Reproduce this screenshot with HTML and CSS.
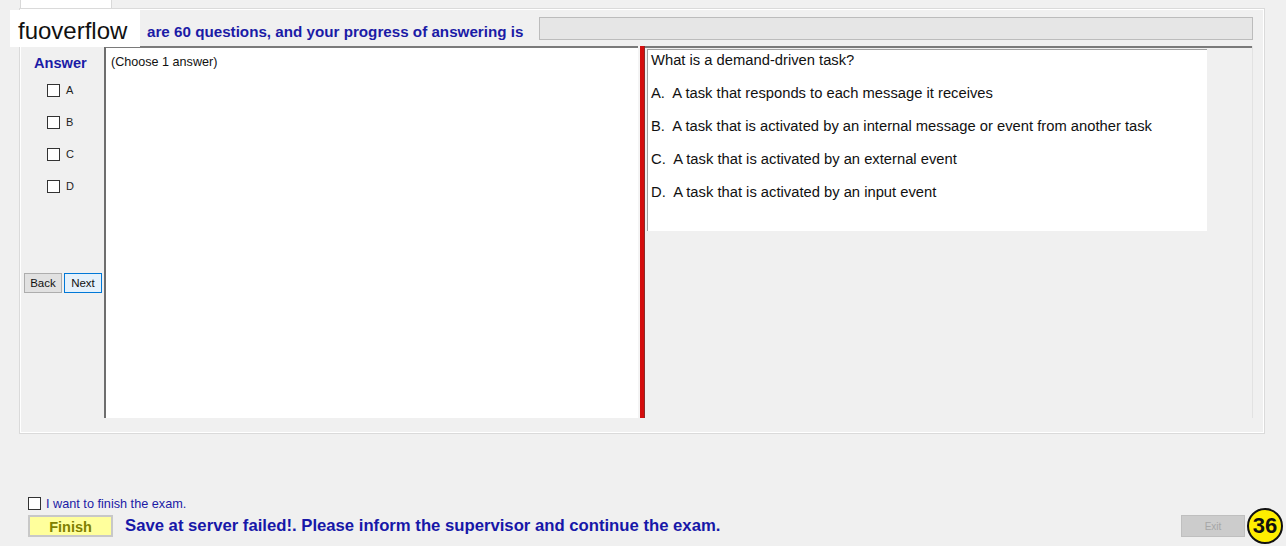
FILE: index.html
```html
<!DOCTYPE html>
<html>
<head>
<meta charset="utf-8">
<link rel="stylesheet" href="styles.css">
</head>
<body>
<div class="tabstrip"><div class="tab"></div></div>
<div class="tabpage">
  <div class="header">
    <div class="progress-text">are 60 questions, and your progress of answering is</div>
    <div class="progress"></div>
  </div>
  <div class="main">
    <div class="answers">
      <div class="answer-title">Answer</div>
      <label class="opt"><span class="box"></span><span>A</span></label>
      <label class="opt"><span class="box"></span><span>B</span></label>
      <label class="opt"><span class="box"></span><span>C</span></label>
      <label class="opt"><span class="box"></span><span>D</span></label>
      <div class="nav">
        <button class="btn back">Back</button>
        <button class="btn next">Next</button>
      </div>
    </div>
    <div class="notes">(Choose 1 answer)</div>
    <div class="divider"></div>
    <div class="question-area">
      <div class="question">
        <p>What is a demand-driven task?</p>
        <p>A.&nbsp; A task that responds to each message it receives</p>
        <p>B.&nbsp; A task that is activated by an internal message or event from another task</p>
        <p>C.&nbsp; A task that is activated by an external event</p>
        <p>D.&nbsp; A task that is activated by an input event</p>
      </div>
    </div>
  </div>
</div>
<div class="footer">
  <label class="finish-check"><span class="box"></span><span>I want to finish the exam.</span></label>
  <div class="actions">
    <button class="finish">Finish</button>
    <div class="message">Save at server failed!. Please inform the supervisor and continue the exam.</div>
    <button class="exit" disabled>Exit</button>
    <div class="badge">36</div>
  </div>
</div>
<div class="watermark">fuoverflow</div>
</body>
</html>
```

FILE: styles.css
```css
html, body {
  margin: 0;
  padding: 0;
}
body {
  width: 1286px;
  height: 546px;
  overflow: hidden;
  background: #f0f0f0;
  font-family: "Liberation Sans", Arial, sans-serif;
  position: relative;
}
.tabstrip {
  height: 8px;
  padding-left: 20px;
  display: flex;
}
.tab {
  width: 92px;
  height: 8px;
  background: #ffffff;
  border: 1px solid #d9d9d9;
  border-top: none;
  border-bottom: none;
  box-sizing: border-box;
}
.tabpage {
  margin-left: 19px;
  width: 1246px;
  height: 426px;
  box-sizing: border-box;
  border: 1px solid #dadada;
  box-shadow: inset 1px 1px 0 #ffffff, inset -1px -1px 0 #ffffff;
  padding: 0 11px 0 3px;
  display: flex;
  flex-direction: column;
}
.header {
  height: 37px;
  display: flex;
  align-items: center;
}
.progress-text {
  margin-left: 124px;
  margin-top: 7px;
  font-weight: bold;
  font-size: 15.2px;
  color: #1b1ba6;
  white-space: nowrap;
}
.progress {
  flex: 1;
  margin-left: 16px;
  height: 23px;
  box-sizing: border-box;
  background: #e6e6e6;
  border: 1px solid #bcbcbc;
  margin-top: 1px;
}
.main {
  height: 372px;
  display: flex;
  border-right: 1px solid #e2e2e2;
}
.answers {
  width: 81px;
  display: flex;
  flex-direction: column;
  border-top: 1px solid #e4e4e4;
}
.answer-title {
  margin-top: 8px;
  margin-left: 11px;
  font-weight: bold;
  font-size: 14.6px;
  color: #1b1ba6;
  height: 24px;
}
.opt {
  display: flex;
  align-items: flex-start;
  box-sizing: border-box;
  height: 32px;
  padding-top: 5px;
  margin-left: 24px;
  font-size: 11px;
  line-height: 13px;
  color: #222;
}
.opt .box, .finish-check .box {
  width: 11px;
  height: 11px;
  border: 1px solid #333;
  background: #fff;
  display: inline-block;
  flex: none;
}
.opt .box {
  margin-right: 6px;
}
.nav {
  margin-top: 66px;
  display: flex;
  gap: 2px;
  margin-left: 1px;
}
.btn {
  height: 20px;
  font-family: "Liberation Sans", Arial, sans-serif;
  font-size: 11.5px;
  padding: 0;
  color: #111;
}
.back {
  width: 38px;
  background: #e1e1e1;
  border: 1px solid #adadad;
}
.next {
  width: 38px;
  background: #e5f1fb;
  border: 1px solid #0078d7;
}
.notes {
  width: 534px;
  box-sizing: border-box;
  background: #fff;
  border-left: 2px solid #6e6e6e;
  border-top: 2px solid #7a7a7a;
  padding: 7px 0 0 5px;
  font-size: 12.6px;
  color: #111;
}
.divider {
  width: 7px;
  box-sizing: border-box;
  border-left: 2px solid #f4f4f4;
  background: #d40d0d;
  border-right: 1px solid #8a2b2b;
}
.question-area {
  flex: 1;
  border-top: 2px solid #7a7a7a;
  padding: 1px 0 0 2px;
}
.question {
  width: 560px;
  height: 182px;
  box-sizing: border-box;
  background: #fff;
  border-left: 1px solid #a0a0a0;
  border-top: 1px solid #a0a0a0;
  padding: 2px 0 0 3px;
  font-size: 14.75px;
  color: #111;
}
.question p {
  margin: 0 0 16px 0;
  line-height: 17px;
}
.footer {
  padding: 63px 3px 0 28px;
  display: flex;
  flex-direction: column;
}
.finish-check {
  display: flex;
  align-items: flex-start;
  height: 11px;
  font-size: 12.7px;
  color: #1b1ba6;
  white-space: nowrap;
  line-height: 14px;
}
.finish-check .box {
  margin-right: 5px;
}
.actions {
  display: flex;
  align-items: center;
  height: 36px;
}
.finish {
  width: 85px;
  height: 22px;
  background: #ffff9c;
  border: 2px solid #c8c8c8;
  font-family: "Liberation Sans", Arial, sans-serif;
  font-weight: bold;
  font-size: 14.5px;
  color: #808000;
  padding: 2px 0 0 0;
}
.message {
  margin-left: 12px;
  font-weight: bold;
  font-size: 16.7px;
  color: #1717a8;
  white-space: nowrap;
  flex: 1;
}
.exit {
  width: 64px;
  height: 22px;
  background: #cccccc;
  border: 1px solid #bfbfbf;
  color: #a6a6a6;
  font-family: "Liberation Sans", Arial, sans-serif;
  font-size: 10px;
  padding: 0;
}
.badge {
  margin-left: 2px;
  width: 36px;
  height: 36px;
  box-sizing: border-box;
  border-radius: 50%;
  background: #ffee00;
  border: 2px solid #111;
  display: flex;
  align-items: center;
  justify-content: center;
  font-weight: bold;
  font-size: 22px;
  color: #111;
}
.watermark {
  position: absolute;
  left: 10px;
  top: 10px;
  width: 130px;
  height: 37px;
  background: #fff;
  font-family: "Liberation Sans", Arial, sans-serif;
  font-size: 24px;
  color: #111;
  box-sizing: border-box;
  padding: 9px 0 0 8px;
  line-height: 24px;
}
```
